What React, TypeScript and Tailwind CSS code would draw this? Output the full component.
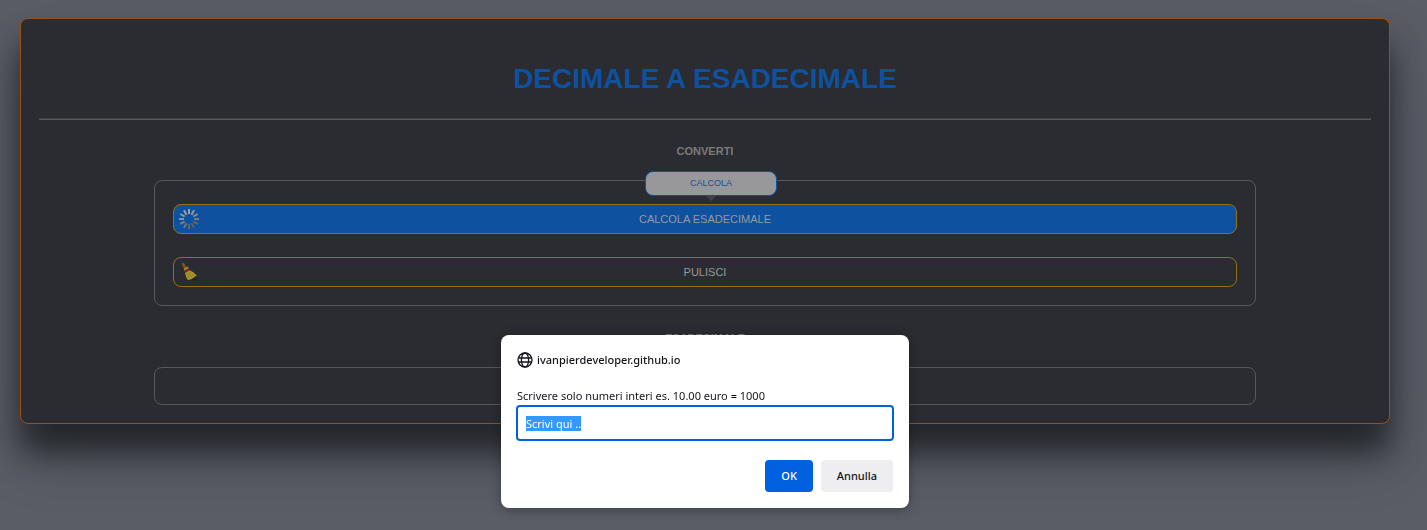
import { useEffect, useRef } from "react";

const spokes = [
  "#a0a0a2", "#97989b", "#8b8e94", "#77797e", "#66696e", "#5d6066",
  "#64666b", "#73767b", "#84878d", "#919397", "#999a9d", "#9f9fa1",
];

function Spinner() {
  return (
    <svg viewBox="0 0 20 20" className="h-5 w-5" aria-hidden="true">
      {spokes.map((color, i) => (
        <rect
          key={i}
          x="9"
          y="0"
          width="2"
          height="5"
          fill={color}
          transform={`rotate(${i * 30} 10 10)`}
        />
      ))}
    </svg>
  );
}

function Broom() {
  return (
    <svg viewBox="0 0 20 20" className="h-5 w-5" aria-hidden="true">
      <ellipse cx="13" cy="16.8" rx="5.5" ry="1.6" fill="#232327" />
      <path d="M2.4 1.6 Q3.6 0 5.4 1.5 L7.8 6 L5.4 7.6 Z" fill="#80501f" />
      <path d="M4.8 6.8 L8.8 4.6 L10 7 L5.8 9.6 Z" fill="#a18a2e" />
      <path d="M5.2 8.8 L9.6 6.2 L10.6 8.2 L6 11 Z" fill="#85192b" />
      <path d="M6 11 L10.6 8.2 Q14.4 9.6 17.8 13.4 Q15.8 14.4 14.9 15.6 Q12.4 18.2 8.8 18 Q6.6 14.8 6 11 Z" fill="#a8942f" />
      <path d="M8 11.6 L10.3 17 M9.6 10.6 L13.2 15.8 M11 10.2 L15.2 14" stroke="#8a751f" strokeWidth=".6" fill="none" />
    </svg>
  );
}

function Globe() {
  return (
    <svg viewBox="0 0 16 16" className="h-4 w-4" fill="none" stroke="#15141a" strokeWidth="1.3" aria-hidden="true">
      <circle cx="8" cy="8" r="7" />
      <ellipse cx="8" cy="8" rx="3.6" ry="7" />
      <path d="M1.3 6h13.4M1.3 10h13.4" />
    </svg>
  );
}

function Prompt() {
  const field = useRef<HTMLInputElement>(null);

  useEffect(() => {
    field.current?.focus();
    field.current?.select();
  }, []);

  return (
    <div className="fixed inset-0 flex items-end justify-center pr-[17px] pb-[22px]">
      <form
        role="dialog"
        aria-labelledby="prompt-origin"
        onSubmit={(e) => e.preventDefault()}
        className="flex w-[408px] flex-col rounded-lg bg-white p-4 font-['Noto_Sans','Open_Sans',sans-serif] text-[11px] text-[#15141a] shadow-[0_2px_12px_rgba(0,0,0,0.3)]"
      >
        <div id="prompt-origin" className="flex h-[18px] items-center gap-1 font-medium">
          <Globe />
          ivanpierdeveloper.github.io
        </div>
        <label htmlFor="prompt-value" className="mt-[18px] leading-[18px]">
          Scrivere solo numeri interi es. 10.00 euro = 1000
        </label>
        <input
          ref={field}
          id="prompt-value"
          defaultValue="Scrivi qui .."
          className="-mx-px h-9 rounded border-2 border-[#0061e0] px-2 outline-none selection:bg-[#3399ff] selection:text-white"
        />
        <div className="mt-[19px] flex justify-end gap-2 font-medium">
          <button type="submit" className="h-8 rounded bg-[#0061e0] px-4 text-white">
            OK
          </button>
          <button type="button" className="h-8 rounded bg-[#eeeef0] px-4">
            Annulla
          </button>
        </div>
      </form>
    </div>
  );
}

export default function App() {
  return (
    <div className="min-h-screen overflow-hidden bg-[#5a5d66] pr-[17px] font-['Liberation_Sans',Arial,sans-serif]">
      <main className="mx-5 mt-[18px] rounded-lg border border-[#9a4f16] bg-[#2b2c31] px-[18px] pt-11 pb-[18px] shadow-[0_30px_60px_rgba(0,0,0,0.22),0_28px_30px_rgba(32,36,41,0.8)]">
        <h1 className="text-center text-[28px] leading-8 font-bold text-[#0d519f]">
          DECIMALE A ESADECIMALE
        </h1>
        <hr className="mt-[23px] border-t border-b border-t-[#414144] border-b-[#57585b]" />
        <div className="mx-[115px]">
          <h2 className="mt-[23px] text-center text-[11px] leading-4 font-bold text-[#7b7b7d]">CONVERTI</h2>
          <section className="relative mt-[21px] flex flex-col gap-[23px] rounded-lg border border-[#56585e] px-[18px] pt-[23px] pb-[18px]">
            <button className="relative h-[30px] rounded-lg border border-[#947012] bg-[#0d519f] text-[11px] text-[#98999c]">
              <span className="absolute top-1 left-[5px]"><Spinner /></span>
              CALCOLA ESADECIMALE
            </button>
            <button className="relative h-[30px] rounded-lg border border-[#947012] text-[11px] text-[#98999c]">
              <span className="absolute top-1 left-[5px]"><Broom /></span>
              PULISCI
            </button>
            <div
              role="tooltip"
              className="absolute -top-[10px] left-[490px] flex h-[25px] w-[132px] items-center justify-center rounded-lg border border-[#0d519f] bg-[#98989a] text-[9px] text-[#0d519f]"
            >
              CALCOLA
              <svg viewBox="0 0 10 5" className="absolute top-6 h-[5px] w-[10px]" aria-hidden="true">
                <path d="M0 0h10L5 5z" fill="#414247" />
              </svg>
            </div>
          </section>
          <h2 className="mt-6 text-center text-[11px] leading-4 font-bold text-[#7b7b7d]">ESADECIMALE</h2>
          <output className="mt-[21px] block h-[38px] rounded-lg border border-[#56585e]" />
        </div>
      </main>
      <Prompt />
    </div>
  );
}
